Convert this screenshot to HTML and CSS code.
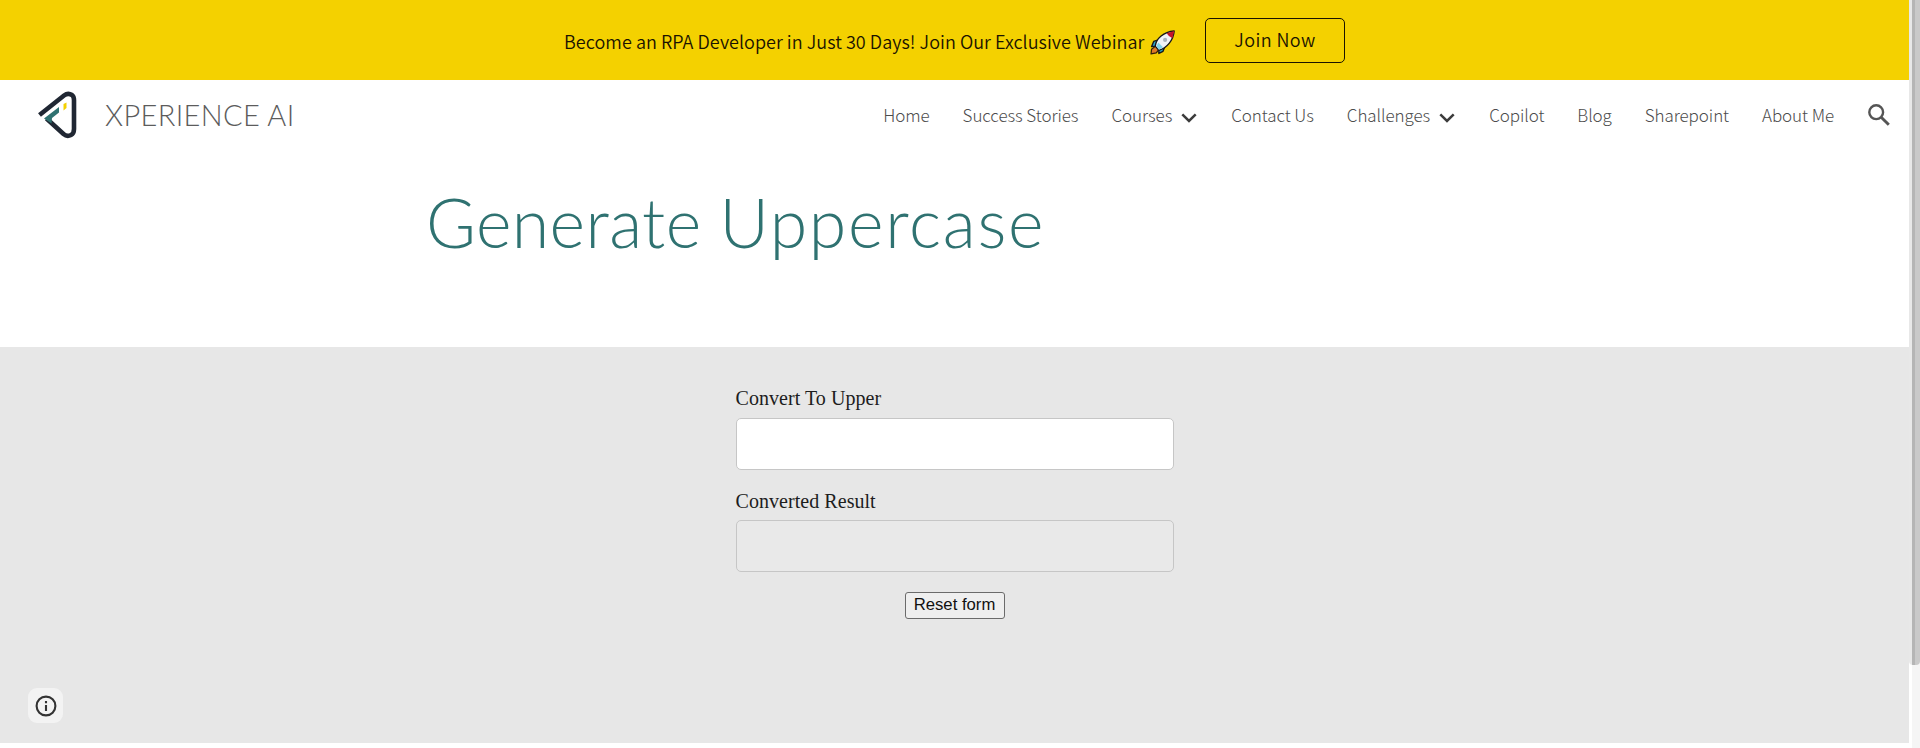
FILE: index.html
```html
<!DOCTYPE html>
<html lang="en">
<head>
<meta charset="utf-8">
<title>Generate Uppercase</title>
<link rel="stylesheet" href="styles.css">
</head>
<body>
<div class="window">
  <div class="page">
    <div class="banner">
      <span class="banner-text">Become an RPA Developer in Just 30 Days! Join Our Exclusive Webinar</span>
      <svg class="rocket" viewBox="0 0 24 24">
        <path d="M8 9.500 3.500 11 1.500 16 6 15.500zM14 16.500 12.500 20.500 8.500 22.500 8.500 18z" fill="#2ba6c9" stroke="#171717" stroke-width="1.300" stroke-linejoin="round"/>
        <path d="M6 15 1.500 18.500 1 23 6 22 9 18z" fill="#e07a24" stroke="#33200c" stroke-width="1.200" stroke-linejoin="round"/>
        <path d="M5 15.500C6 8 13 2 23.200 1 22.500 10 16 17.500 8.500 19.500z" fill="#f1f4f8" stroke="#171717" stroke-width="1.300" stroke-linejoin="round"/>
        <path d="M16 3 23.200 1 21.500 8Q18 6.500 16 3z" fill="#c4142b"/>
        <path d="M6 15.500 8 12 12.500 16.500 8.500 19z" fill="#83d5ea"/>
        <circle cx="14.500" cy="9.500" r="2" fill="#aab2be"/>
      </svg>
      <a class="join">Join Now</a>
    </div>
    <header class="header">
      <svg class="logo" viewBox="0 0 40 48">
        <path d="M2.500 24 27 4.500Q31 1.500 35 4 37 5.500 37 9V38Q37 42.500 34 44 30 46 26.500 43L9.500 27.500" fill="none" stroke="#202733" stroke-width="4.600"/>
        <path d="M7 27.500 22 16V21.500L15 27 14.500 32.500z" fill="#2f7271"/>
        <path d="M26.500 13 29.500 11.500V17L26.500 19.500z" fill="#f4d100"/>
      </svg>
      <span class="brand">XPERIENCE AI</span>
      <nav class="nav">
        <a>Home</a>
        <a>Success Stories</a>
        <a>Courses<svg class="chev" viewBox="0 0 16 10"><path d="M1.300 1.300 8 8 14.700 1.300" fill="none" stroke="#3c3c3c" stroke-width="2.500"/></svg></a>
        <a>Contact Us</a>
        <a>Challenges<svg class="chev" viewBox="0 0 16 10"><path d="M1.300 1.300 8 8 14.700 1.300" fill="none" stroke="#3c3c3c" stroke-width="2.500"/></svg></a>
        <a>Copilot</a>
        <a>Blog</a>
        <a>Sharepoint</a>
        <a>About Me</a>
      </nav>
      <svg class="search" viewBox="0 0 22 22"><circle cx="8.200" cy="8.200" r="6.900" fill="none" stroke="#555" stroke-width="2.400"/><path d="M13.200 13.200 20.800 20.800" stroke="#555" stroke-width="2.900"/></svg>
    </header>
    <section class="hero"><h1 class="title">Generate <span class="title-wide">Uppercase</span></h1></section>
    <main class="main">
      <form class="form">
        <label class="label" for="src">Convert To Upper</label>
        <input class="field" id="src" type="text">
        <label class="label label-result" for="out">Converted Result</label>
        <input class="field field-result" id="out" type="text" disabled>
        <button class="reset" type="reset">Reset form</button>
      </form>
      <div class="info"><svg class="info-icon" viewBox="0 0 22 22"><circle cx="11" cy="11" r="9.400" fill="none" stroke="#333" stroke-width="2.100"/><path d="M11 10V16M11 6V8.200" stroke="#333" stroke-width="2.100"/></svg></div>
    </main>
  </div>
  <div class="scrollbar"><div class="thumb"></div></div>
</div>
</body>
</html>
```
FILE: styles.css
```css
* { box-sizing: border-box; }
body { margin: 0; background: #fff; overflow: hidden; font-family: "Noto Sans CJK SC", "Open Sans", sans-serif; }
.window { display: flex; height: 748px; }
.page { width: 1909px; flex: none; display: flex; flex-direction: column; }
.banner { height: 80px; flex: none; padding-left: 564px; padding-top: 18px; background: #f4d100; display: flex; align-items: flex-start; color: #1a1300; }
.banner-text { width: 580px; white-space: nowrap; font-size: 18px; font-weight: 350; line-height: 28px; letter-spacing: .04px; padding-top: 9px; }
.rocket { width: 25px; height: 25px; margin: 12px 0 0 6px; flex: none; }
.join { width: 140px; height: 45px; margin-left: 30px; border: 1px solid #1a1300; border-radius: 5px; text-align: center; font-size: 18px; font-weight: 350; line-height: 41px; letter-spacing: .4px; }
.header { height: 70px; flex: none; padding-left: 37px; padding-right: 19px; display: flex; align-items: center; }
.logo { width: 40px; height: 48px; flex: none; }
.brand { margin-left: 28px; font-family: Lato, sans-serif; font-weight: 300; font-size: 29px; line-height: 40px; letter-spacing: .35px; color: #5c5c5c; white-space: nowrap; }
.nav { margin-left: auto; display: flex; gap: 33px; white-space: nowrap; font-size: 17px; line-height: 28px; font-weight: 300; letter-spacing: -.08px; color: #4c4c4c; }
.nav a { display: flex; align-items: center; }
.chev { width: 16px; height: 10px; margin: 5px 1px 0 9px; }
.search { width: 22px; height: 22px; margin-left: 34px; flex: none; }
.hero { height: 197px; flex: none; padding: 28px 0 0 426px; }
.title { margin: 0; font-family: Lato, sans-serif; font-weight: 300; font-size: 68px; line-height: 88px; letter-spacing: .4px; word-spacing: -1px; color: #2f7271; white-space: nowrap; }
.title-wide { letter-spacing: 1.700px; }
.main { height: 396px; flex: none; background: #e7e7e7; position: relative; display: flex; justify-content: center; padding-top: 37px; }
.form { width: 438px; display: flex; flex-direction: column; font-family: "Liberation Serif", serif; }
.label { font-size: 20px; line-height: 28px; margin-bottom: 6px; letter-spacing: .05px; color: #1d1d1d; }
.label-result { margin-bottom: 5px; }
.field { width: 438px; height: 52px; margin-bottom: 17px; border: 1px solid #c6c6c6; border-radius: 5px; background: #fff; }
.field-result { background: #e9e9e9; margin-bottom: 20px; }
.reset { align-self: center; width: 100px; height: 27px; padding: 0 0 2px; border: 1px solid #6b6b6b; border-radius: 3px; background: #efefef; font-family: "Liberation Sans", sans-serif; font-size: 16.700px; line-height: 23px; color: #111; }
.info { position: absolute; left: 28px; top: 341px; width: 35px; height: 35px; border-radius: 9px; background: #f3f3f3; display: flex; align-items: center; justify-content: center; }
.info-icon { width: 22px; height: 22px; }
.scrollbar { width: 11px; flex: none; background: #f5f5f5; border-left: 3px solid #fff; }
.thumb { width: 11px; height: 665px; margin-left: -3px; background: linear-gradient(90deg, #e8e8e8 0 3px, #b5b5b5 3px 6px, #c9c9c9 6px); border-radius: 0 0 4px 4px; }
```
